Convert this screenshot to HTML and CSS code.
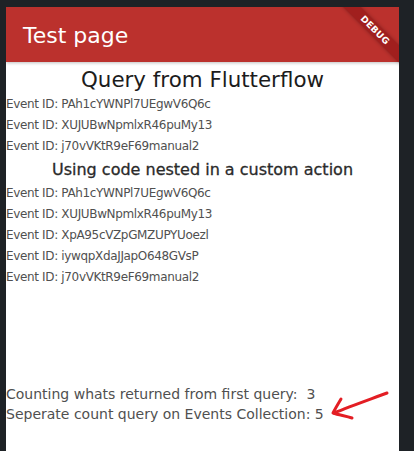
FILE: index.html
```html
<!DOCTYPE html>
<html>
<head>
<meta charset="utf-8">
<link rel="stylesheet" href="styles.css">
</head>
<body>
<div class="phone">
  <header class="appbar"><span class="appbar-title">Test page</span></header>
  <main class="content">
    <h1 class="title">Query from Flutterflow</h1>
    <div class="list list-a">
      <p>Event ID: PAh1cYWNPl7UEgwV6Q6c</p>
      <p>Event ID: XUJUBwNpmlxR46puMy13</p>
      <p>Event ID: j70vVKtR9eF69manual2</p>
    </div>
    <h2 class="subtitle">Using code nested in a custom action</h2>
    <div class="list list-b">
      <p>Event ID: PAh1cYWNPl7UEgwV6Q6c</p>
      <p>Event ID: XUJUBwNpmlxR46puMy13</p>
      <p>Event ID: XpA95cVZpGMZUPYUoezl</p>
      <p>Event ID: iywqpXdaJJapO648GVsP</p>
      <p>Event ID: j70vVKtR9eF69manual2</p>
    </div>
    <div class="list counts">
      <p>Counting whats returned from first query:&nbsp; 3</p>
      <p>Seperate count query on Events Collection: 5</p>
    </div>
  </main>
  <div class="debug-banner">DEBUG</div>
  <svg class="arrow" width="70" height="45" viewBox="0 0 70 45">
    <path d="M61 11 C45 17 25 24 8 31" fill="none" stroke="#e31e24" stroke-width="3" stroke-linecap="round"/>
    <path d="M15 17 C12 22 9 27 7 31 C13 33 20 34 26 36" fill="none" stroke="#e31e24" stroke-width="3" stroke-linecap="round" stroke-linejoin="round"/>
  </svg>
</div>
</body>
</html>
```

FILE: styles.css
```css
html, body {
  margin: 0;
  padding: 0;
}
body {
  background: #1e2226;
  height: 451px;
  overflow: hidden;
  font-family: "DejaVu Sans", "Noto Sans", sans-serif;
}
.phone {
  position: relative;
  margin: 7px 0 0 6px;
  width: 393px;
  height: 444px;
  background: #ffffff;
  overflow: hidden;
}
.appbar {
  height: 55px;
  background: #bb312d;
  display: flex;
  align-items: center;
  padding-left: 17px;
  box-shadow: 0 1px 3px rgba(0, 0, 0, 0.25);
  position: relative;
}
.appbar-title {
  color: #ffffff;
  font-size: 22px;
  font-weight: 400;
  margin-top: 2px;
}
.content {
  display: flex;
  flex-direction: column;
}
.title {
  margin: 4px 0 0;
  font-size: 21.4px;
  line-height: 28px;
  font-weight: 400;
  color: #1c1c1c;
  text-align: center;
}
.subtitle {
  margin: 0;
  font-size: 16px;
  line-height: 26px;
  font-weight: 400;
  -webkit-text-stroke: 0.3px #2a2a2a;
  color: #2a2a2a;
  text-align: center;
}
.list p {
  margin: 0;
  color: #505050;
  white-space: nowrap;
}
.list-a p,
.list-b p {
  font-size: 12px;
  letter-spacing: -0.35px;
  line-height: 21px;
}
.counts {
  margin-top: 96px;
}
.counts p {
  font-size: 14px;
  line-height: 20px;
}
.debug-banner {
  position: absolute;
  left: 309px;
  top: 17px;
  width: 120px;
  height: 12px;
  line-height: 12px;
  transform: rotate(45deg);
  background: #a11f1e;
  box-shadow: 0 0 4px rgba(0, 0, 0, 0.3);
  color: #ffffff;
  font-weight: 700;
  font-size: 9px;
  text-align: center;
  letter-spacing: 0.3px;
}
.arrow {
  position: absolute;
  left: 320px;
  top: 375px;
}
```
